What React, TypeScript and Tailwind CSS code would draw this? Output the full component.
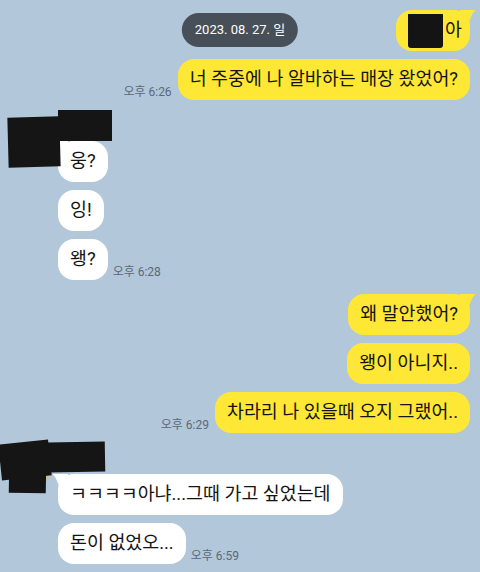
import type { ReactNode } from "react";

const YELLOW = "#fee835";

function Tail({ side, color }: { side: "left" | "right"; color: string }) {
  if (side === "right") {
    return (
      <svg
        className="absolute top-0 -right-[6px]"
        width="16"
        height="16"
        viewBox="0 0 16 16"
      >
        <path d="M0 0 H15.5 Q11 4 8 16 H0 Z" fill={color} />
      </svg>
    );
  }
  return (
    <svg
      className="absolute top-0 -left-[6px]"
      width="16"
      height="16"
      viewBox="0 0 16 16"
    >
      <path d="M16 0 H0.5 Q5 4 8 16 H16 Z" fill={color} />
    </svg>
  );
}

function Bubble({
  mine,
  tail,
  children,
  className = "",
}: {
  mine?: boolean;
  tail?: boolean;
  children: ReactNode;
  className?: string;
}) {
  const color = mine ? YELLOW : "#ffffff";
  return (
    <div
      className={`relative flex items-center h-[41px] rounded-[16px] px-[12px] text-[18.4px] leading-none text-[#141414] whitespace-nowrap ${
        mine ? "bg-[#fee835]" : "bg-white"
      } ${className}`}
    >
      {tail && <Tail side={mine ? "right" : "left"} color={color} />}
      <span className="relative">{children}</span>
    </div>
  );
}

function Time({ children }: { children: ReactNode }) {
  return (
    <span className="text-[12px] leading-none text-[#5a687b] mb-[2px] whitespace-nowrap">
      {children}
    </span>
  );
}

function MyRow({ tail, time, children, className = "" }: { tail?: boolean; time?: string; children: ReactNode; className?: string }) {
  return (
    <div className="flex justify-end items-end gap-[6px] pr-[10px]">
      {time && <Time>{time}</Time>}
      <Bubble mine tail={tail} className={className}>
        {children}
      </Bubble>
    </div>
  );
}

function TheirRow({ tail, time, children }: { tail?: boolean; time?: string; children: ReactNode }) {
  return (
    <div className="flex items-end gap-[5px] pl-[58px]">
      <Bubble tail={tail}>{children}</Bubble>
      {time && <Time>{time}</Time>}
    </div>
  );
}

export default function App() {
  return (
    <div
      className="relative w-[480px] h-[572px] overflow-hidden bg-[#b2c7d9] pt-[10px] flex flex-col"
      style={{ fontFamily: '"Roboto", "Noto Sans CJK KR", sans-serif' }}
    >
      {/* date header */}
      <div className="absolute top-[13px] left-1/2 -translate-x-1/2 h-[34px] px-[13px] rounded-full bg-[#475059] text-white text-[13px] flex items-center whitespace-nowrap z-10">
        2023. 08. 27. 일
      </div>

      {/* me */}
      <div className="flex flex-col gap-[8px]">
        <MyRow tail className="pr-[8px]">
          <span className="flex items-center">
            <span className="inline-block w-[35px] h-[34px] bg-[#141414] rounded-b-[3px]" />
            <span className="ml-[2px]">아</span>
          </span>
        </MyRow>
        <MyRow time="오후 6:26">너 주중에 나 알바하는 매장 왔었어?</MyRow>
      </div>

      {/* friend */}
      <div className="relative flex flex-col gap-[8px] pt-[41px]">
        <div className="absolute left-[10px] top-[17px] w-[40px] h-[40px] rounded-[15px] bg-[#c8c09e]" />
        <div className="absolute left-[8px] top-[17px] w-[52px] h-[50px] bg-[#151515] -rotate-[1.5deg] z-10" />
        <div className="absolute left-[58px] top-[10px] w-[54px] h-[31px] bg-[#151515] z-10" />
        <TheirRow tail>웅?</TheirRow>
        <TheirRow>잉!</TheirRow>
        <TheirRow time="오후 6:28">왱?</TheirRow>
      </div>

      {/* me */}
      <div className="flex flex-col gap-[8px] mt-[14px]">
        <MyRow tail>왜 말안했어?</MyRow>
        <MyRow>왱이 아니지..</MyRow>
        <MyRow time="오후 6:29">차라리 나 있을때 오지 그랬어..</MyRow>
      </div>

      {/* friend */}
      <div className="relative flex flex-col gap-[8px] pt-[41px]">
        <div className="absolute left-[10px] top-[14px] w-[40px] h-[40px] rounded-[15px] bg-[#c8c09e]" />
        <div className="absolute left-0 top-[9px] w-[50px] h-[36px] bg-[#151515] -rotate-[6deg] z-10" />
        <div className="absolute left-[48px] top-[9px] w-[57px] h-[30px] bg-[#151515] -rotate-[1deg] z-10" />
        <div className="absolute left-[9px] top-[32px] w-[37px] h-[28px] bg-[#151515] rotate-[1deg] z-10" />
        <TheirRow tail>ㅋㅋㅋㅋ아냐...그때 가고 싶었는데</TheirRow>
        <TheirRow time="오후 6:59">돈이 없었오...</TheirRow>
      </div>
    </div>
  );
}
